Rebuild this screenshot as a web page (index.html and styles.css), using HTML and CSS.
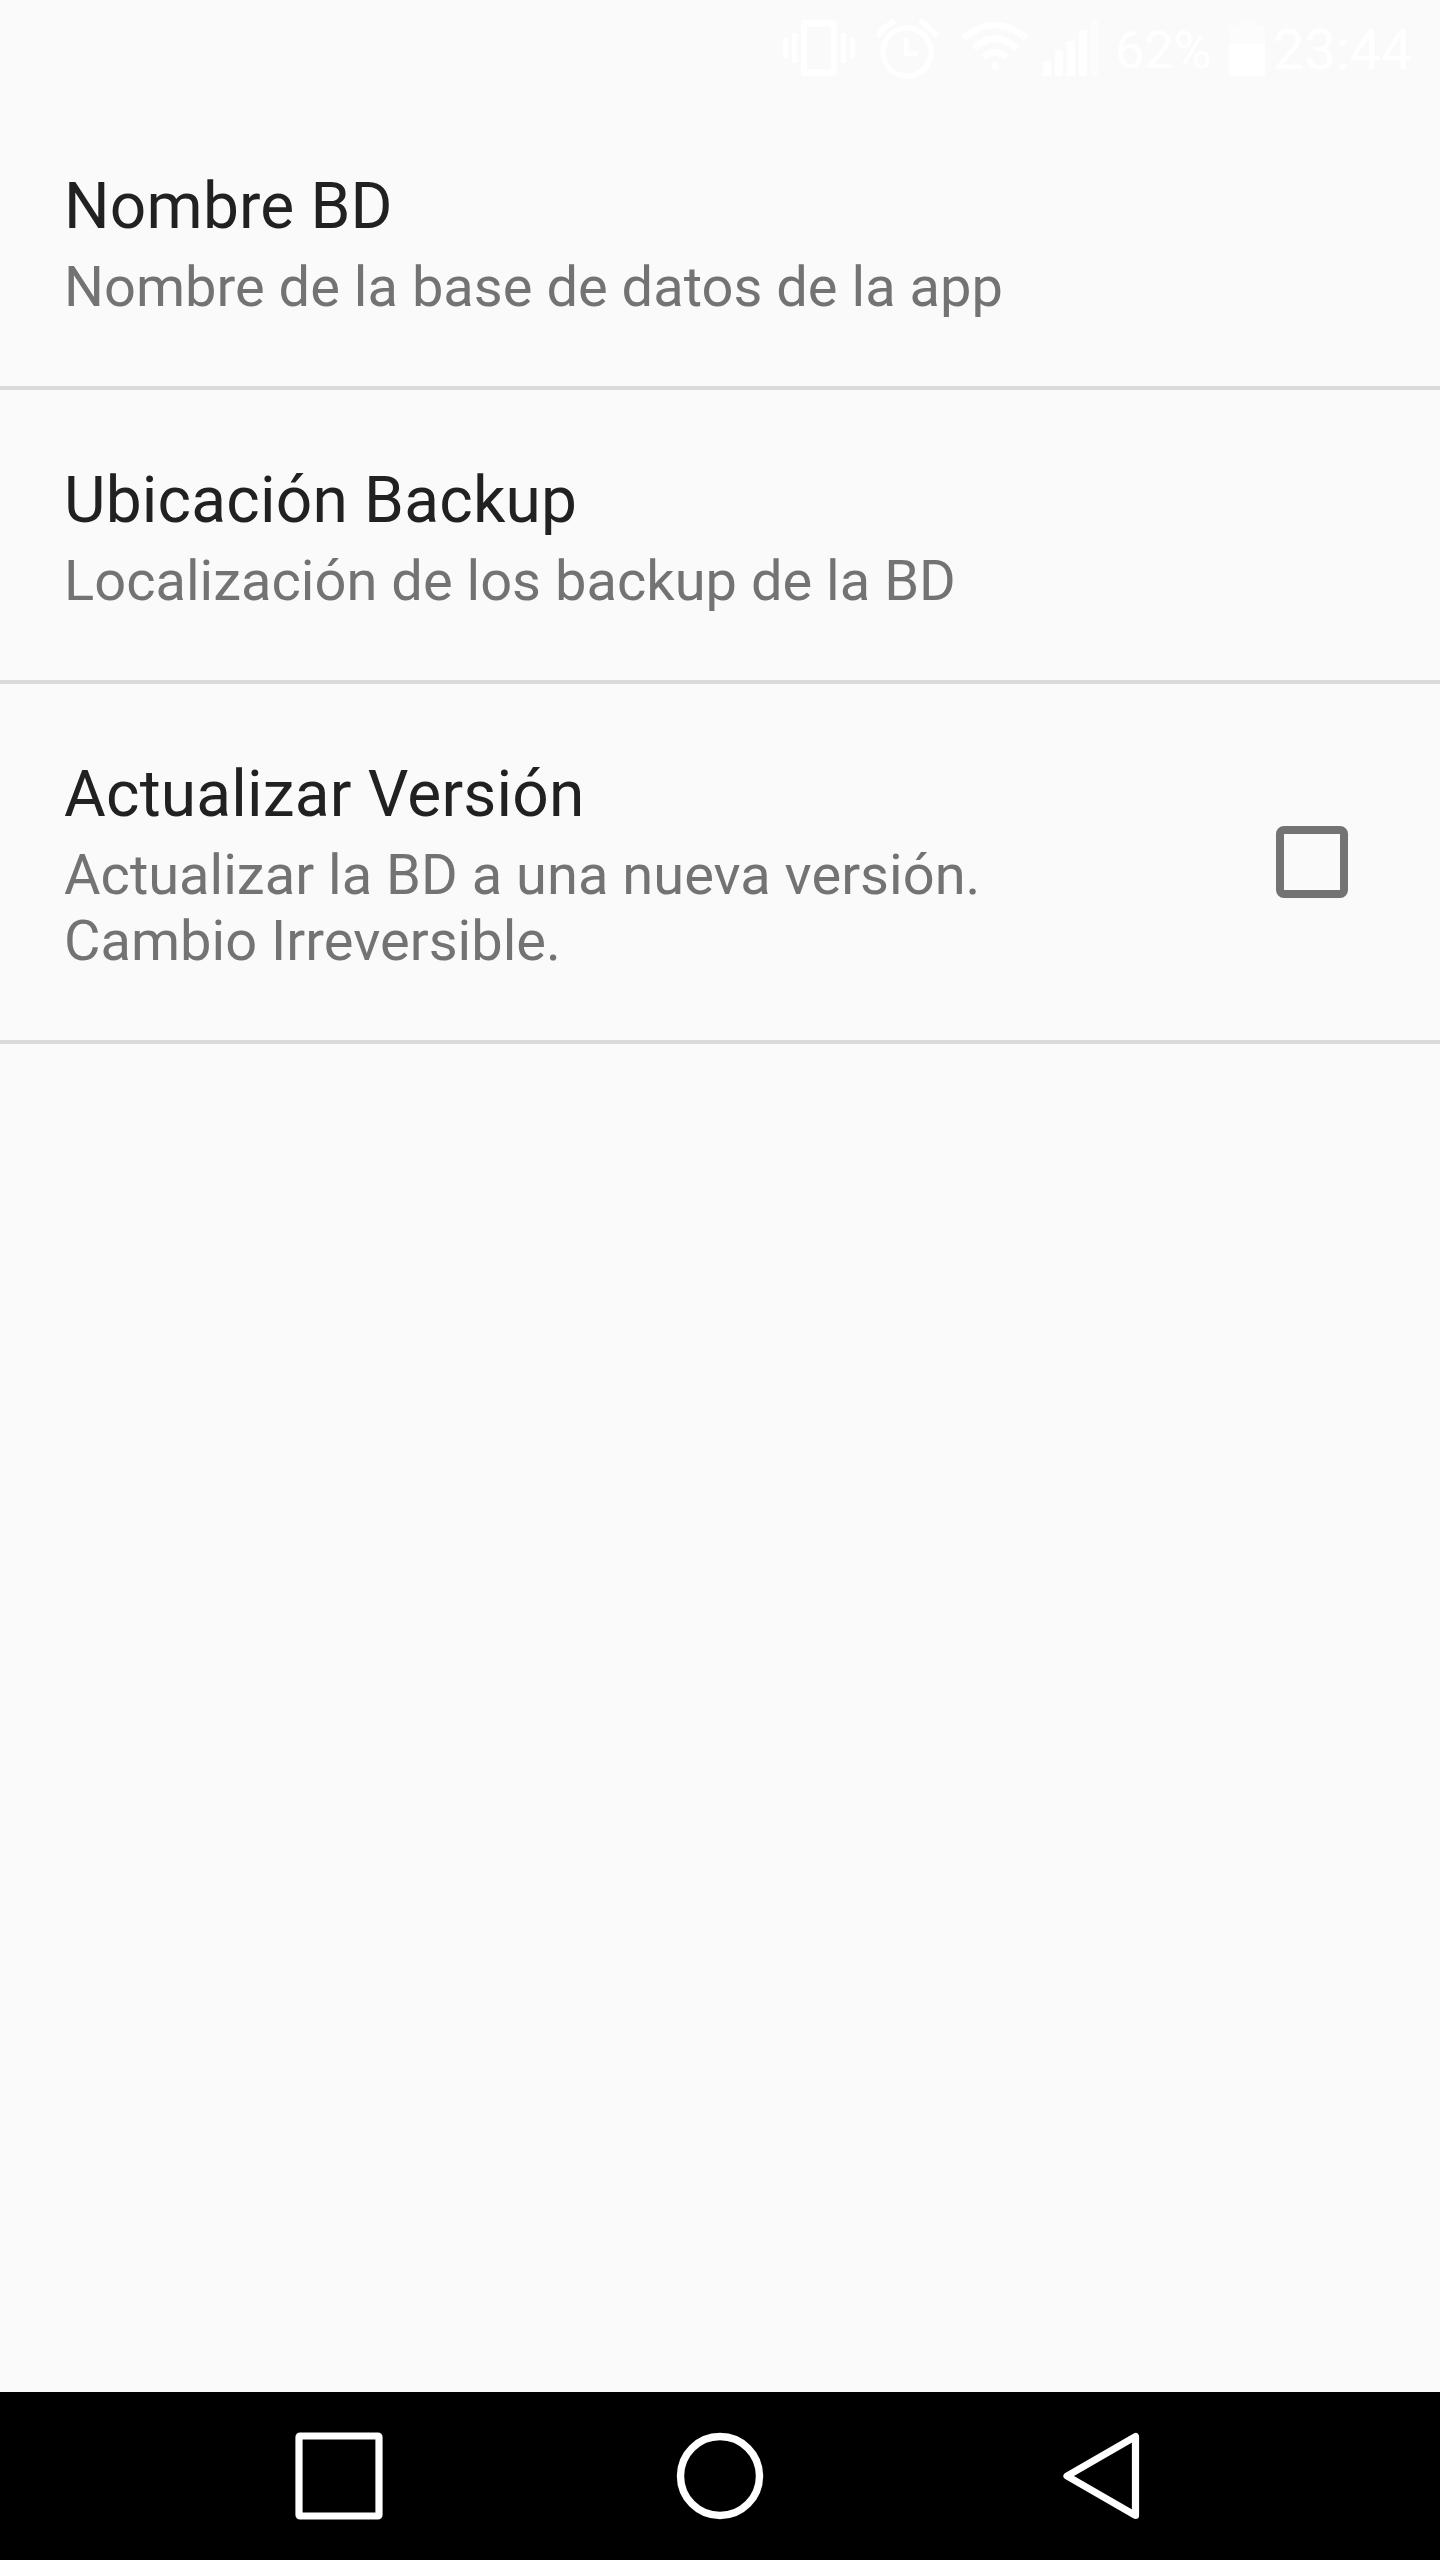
FILE: index.html
```html
<!DOCTYPE html>
<html lang="es">
<head>
<meta charset="utf-8">
<title>Ajustes</title>
<link rel="stylesheet" href="styles.css">
</head>
<body>
<div class="screen">
  <header class="status-bar">
    <svg class="status-icon vibrate" width="72" height="96" viewBox="0 0 72 96" fill="#fff">
      <path d="M0 38h5v20H0zM9 33h5v30H9zM58 33h5v30h-5zM67 38h5v20h-5z"/>
      <path fill-rule="evenodd" d="M22 20h28a4 4 0 0 1 4 4v48a4 4 0 0 1-4 4H22a4 4 0 0 1-4-4V24a4 4 0 0 1 4-4zM24 27v42h24V27z"/>
    </svg>
    <svg class="status-icon alarm" width="64" height="96" viewBox="0 0 64 96" fill="none" stroke="#fff">
      <circle cx="32" cy="52" r="24" stroke-width="5.5"/>
      <path d="M31.500 38v15.500h11.500" stroke-width="5"/>
      <path d="M2.500 36.500Q9 26.500 19.500 21M61.500 36.500Q55 26.500 44.500 21" stroke-width="5.500"/>
    </svg>
    <svg class="status-icon wifi" width="68" height="96" viewBox="0 0 68 96" fill="none" stroke="#fff">
      <path d="M2.500 38.500Q34 11.500 65.500 38.500M12.500 48Q34 29.500 55.500 48M22.500 57.500Q34 47 45.500 57.500" stroke-width="6.500"/>
      <circle cx="34" cy="66" r="3.700" fill="#fff" stroke="none"/>
    </svg>
    <svg class="status-icon signal" width="56" height="96" viewBox="0 0 56 96" fill="#fff">
      <path d="M0 61h8v15H0zM12 51h8v25h-8zM24 41h8v35h-8zM36 30h8v46h-8z"/>
      <path opacity=".4" d="M48 20h8v56h-8z"/>
    </svg>
    <span class="battery-level">62%</span>
    <svg class="status-icon battery" width="36" height="96" viewBox="0 0 36 96" fill="#fff">
      <path opacity=".4" d="M9 20h18v6h9v18H0V26h9z"/>
      <path d="M0 44h36v32H0z"/>
    </svg>
    <span class="clock">23:44</span>
  </header>
  <main class="preferences">
    <section class="preference">
      <div class="preference-text">
        <div class="title">Nombre BD</div>
        <div class="summary">Nombre de la base de datos de la app</div>
      </div>
    </section>
    <section class="preference">
      <div class="preference-text">
        <div class="title">Ubicación Backup</div>
        <div class="summary">Localización de los backup de la BD</div>
      </div>
    </section>
    <section class="preference">
      <div class="preference-text">
        <div class="title">Actualizar Versión</div>
        <div class="summary">Actualizar la BD a una nueva versión.<br>Cambio Irreversible.</div>
      </div>
      <div class="checkbox" role="checkbox" aria-checked="false"></div>
    </section>
  </main>
  <nav class="nav-bar">
    <svg width="88" height="88" viewBox="0 0 88 88" fill="none" stroke="#fff" stroke-width="7.200"><rect x="4" y="4" width="80" height="80" rx="1"/></svg>
    <svg width="88" height="88" viewBox="0 0 88 88" fill="none" stroke="#fff" stroke-width="7.400"><circle cx="44" cy="44" r="39.500"/></svg>
    <svg class="back" width="77" height="88" viewBox="0 0 77 88" fill="none" stroke="#fff" stroke-width="7.200" stroke-linejoin="round"><path d="M4 44L72.500 4.500V83.500z"/></svg>
  </nav>
</div>
</body>
</html>
```
FILE: styles.css
```css
body {
  margin: 0;
  background: #fafafa;
  font-family: Roboto, "Liberation Sans", sans-serif;
}

svg {
  display: block;
  flex: none;
}

.screen {
  display: flex;
  flex-direction: column;
  width: 1440px;
  height: 2560px;
}

.status-bar {
  display: flex;
  height: 96px;
  padding-left: 783px;
  color: #fff;
  white-space: nowrap;
}

.alarm { margin-left: 20px; }
.wifi { margin-left: 22px; }
.signal { margin-left: 14px; }

.battery-level {
  width: 114px;
  margin-left: 16px;
  font-size: 52px;
  line-height: 101px;
}

.clock {
  margin-left: 8px;
  font-size: 56px;
  line-height: 101px;
}

.preferences {
  flex: 1;
}

.preference {
  display: flex;
  align-items: center;
  justify-content: space-between;
  padding: 0 92px 0 64px;
  border-bottom: 4px solid #dadada;
}

.preference-text {
  padding: 73px 0 66px;
}

.title {
  margin-bottom: 10px;
  color: #212121;
  font-size: 64px;
  letter-spacing: 0.2px;
  line-height: 75px;
}

.summary {
  color: #737373;
  font-size: 56px;
  letter-spacing: 0.02px;
  line-height: 66px;
}

.checkbox {
  box-sizing: border-box;
  width: 72px;
  height: 72px;
  border: 8px solid #737373;
  border-radius: 8px;
}

.nav-bar {
  display: flex;
  align-items: center;
  gap: 293px;
  height: 168px;
  padding-left: 295px;
  background: #000;
}

.back {
  margin-left: 6px;
}
```
